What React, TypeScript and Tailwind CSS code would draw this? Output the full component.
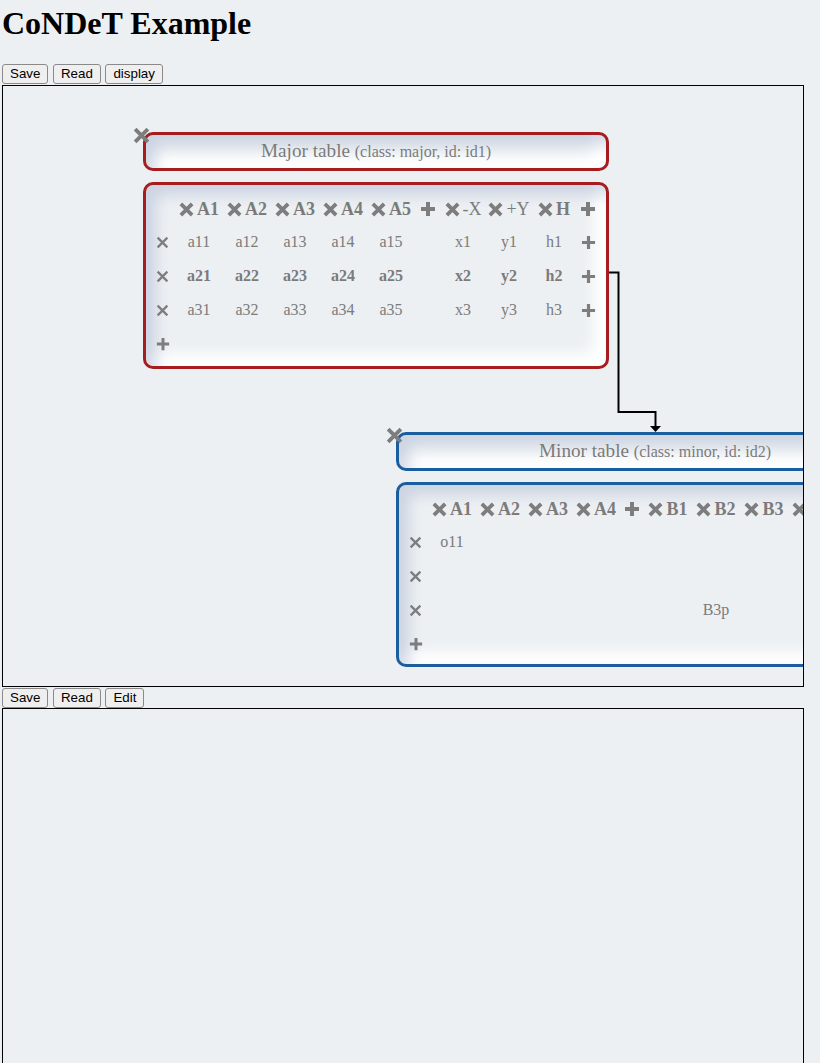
import React from "react";

const GRAY = "#7d7d7d";

function Cross({ size = 13, stroke = 3 }: { size?: number; stroke?: number }) {
  return (
    <svg width={size} height={size} viewBox="0 0 16 16" className="shrink-0">
      <path d="M2 2L14 14M14 2L2 14" stroke={GRAY} strokeWidth={stroke} />
    </svg>
  );
}

function Plus({ size = 15, stroke = 3.5 }: { size?: number; stroke?: number }) {
  return (
    <svg width={size} height={size} viewBox="0 0 16 16" className="shrink-0">
      <path d="M8 1V15M1 8H15" stroke={GRAY} strokeWidth={stroke} />
    </svg>
  );
}

type Col = { label?: string; w: number; plus?: boolean; light?: boolean };

function HeadCell({ c }: { c: Col }) {
  return (
    <div className="flex items-center justify-center" style={{ width: c.w }}>
      {c.plus ? (
        <Plus size={16} stroke={4} />
      ) : c.label ? (
        <span className="flex items-center gap-[3px]">
          <Cross size={15} stroke={4} />
          <span className={c.light ? "font-normal" : "font-bold"}>{c.label}</span>
        </span>
      ) : null}
    </div>
  );
}

function TableNode({
  left,
  top,
  width,
  color,
  title,
  info,
  cols,
  rows,
  pad,
}: {
  left: number;
  top: number;
  width: number;
  color: string;
  title: string;
  info: string;
  cols: Col[];
  rows: { cells: string[]; bold?: boolean; endPlus?: boolean }[];
  pad: string;
}) {
  const boxShadow = "shadow-[inset_10px_10px_14px_rgba(178,190,214,0.55),inset_-12px_-12px_14px_#ffffff]";
  return (
    <div className="absolute" style={{ left, top, width }}>
      <div
        className={`relative flex h-[39px] items-center justify-center rounded-[10px] border-[3px] ${boxShadow}`}
        style={{ borderColor: color }}
      >
        <span className="whitespace-nowrap text-[19.2px] text-[#7b7b7b]">
          {title} <span className="text-[16px]">{info}</span>
        </span>
        <div className="absolute left-[-13px] top-[-8px]">
          <Cross size={17} stroke={3.6} />
        </div>
      </div>
      <div
        className={`mt-[11px] rounded-[10px] border-[3px] pl-[4px] ${pad} ${boxShadow}`}
        style={{ borderColor: color }}
      >
        <div className="flex h-[32px] items-center text-[18px] text-[#7b7b7b]">
          <div className="w-[25px]" />
          {cols.map((c, i) => (
            <HeadCell key={i} c={c} />
          ))}
        </div>
        {rows.map((r, ri) => (
          <div
            key={ri}
            className={`flex h-[34px] items-center text-[16px] text-[#7b7b7b] ${r.bold ? "font-bold" : ""}`}
          >
            <div className="flex w-[25px] justify-center">
              <Cross size={13} stroke={2.8} />
            </div>
            {cols.map((c, ci) => (
              <div key={ci} className="flex justify-center" style={{ width: c.w }}>
                {ci === cols.length - 1 && r.endPlus ? <Plus size={15} stroke={3.4} /> : r.cells[ci] || ""}
              </div>
            ))}
          </div>
        ))}
        <div className="flex h-[34px] items-center">
          <div className="flex w-[25px] justify-center">
            <Plus size={14} stroke={3.4} />
          </div>
        </div>
      </div>
    </div>
  );
}

const majorCols: Col[] = [
  { label: "A1", w: 48 },
  { label: "A2", w: 48 },
  { label: "A3", w: 48 },
  { label: "A4", w: 48 },
  { label: "A5", w: 48 },
  { plus: true, w: 26 },
  { label: "-X", w: 44, light: true },
  { label: "+Y", w: 48, light: true },
  { label: "H", w: 42 },
  { plus: true, w: 26 },
];

const minorCols: Col[] = [
  { label: "A1", w: 48 },
  { label: "A2", w: 48 },
  { label: "A3", w: 48 },
  { label: "A4", w: 48 },
  { plus: true, w: 24 },
  { label: "B1", w: 48 },
  { label: "B2", w: 48 },
  { label: "B3", w: 48 },
  { label: "B4", w: 48 },
  { plus: true, w: 26 },
];

function Buttons({ labels }: { labels: string[] }) {
  return (
    <div className="flex gap-[4.6px] pl-[2px]">
      {labels.map((l) => (
        <button
          key={l}
          className="h-[20px] rounded-[3px] border border-[#8a8a8a] bg-[#efefef] px-[7px] font-['Liberation_Sans',Arial,sans-serif] text-[13.33px] leading-none text-black"
        >
          {l}
        </button>
      ))}
    </div>
  );
}

export default function App() {
  return (
    <div className="min-h-screen bg-[#edf0f3] pt-[5px] font-['Liberation_Serif','Times_New_Roman',serif] text-black">
      <h1 className="mb-[22px] ml-[2px] text-[32px] font-bold leading-[37px]">CoNDeT Example</h1>

      <Buttons labels={["Save", "Read", "display"]} />

      {/* editor canvas */}
      <div className="relative ml-[2px] mt-px h-[602px] w-[802px] overflow-hidden border border-black">
        <TableNode
          left={140}
          top={46}
          width={466}
          color="#a51d1f"
          title="Major table"
          info="(class: major, id: id1)"
          cols={majorCols}
          pad="pt-[8px] pb-[5px]"
          rows={[
            { cells: ["a11", "a12", "a13", "a14", "a15", "", "x1", "y1", "h1"], endPlus: true },
            { cells: ["a21", "a22", "a23", "a24", "a25", "", "x2", "y2", "h2"], bold: true, endPlus: true },
            { cells: ["a31", "a32", "a33", "a34", "a35", "", "x3", "y3", "h3"], endPlus: true },
          ]}
        />

        <svg className="absolute left-0 top-0" width="800" height="600">
          <polyline points="606,186.5 615.5,186.5 615.5,326 652.5,326 652.5,341" fill="none" stroke="#000" strokeWidth="2" />
          <polygon points="647,340 658,340 652.5,346" fill="#000" />
        </svg>

        <TableNode
          left={393}
          top={346}
          width={518}
          color="#1b5e9d"
          title="Minor table"
          info="(class: minor, id: id2)"
          cols={minorCols}
          pad="pt-[8px] pb-[3px]"
          rows={[
            { cells: ["o11"] },
            { cells: [] },
            { cells: ["", "", "", "", "", "", "B3p"] },
          ]}
        />
      </div>

      <div className="pt-px">
        <Buttons labels={["Save", "Read", "Edit"]} />
      </div>

      {/* display canvas */}
      <div className="ml-[2px] h-[602px] w-[802px] border border-black" />
    </div>
  );
}
